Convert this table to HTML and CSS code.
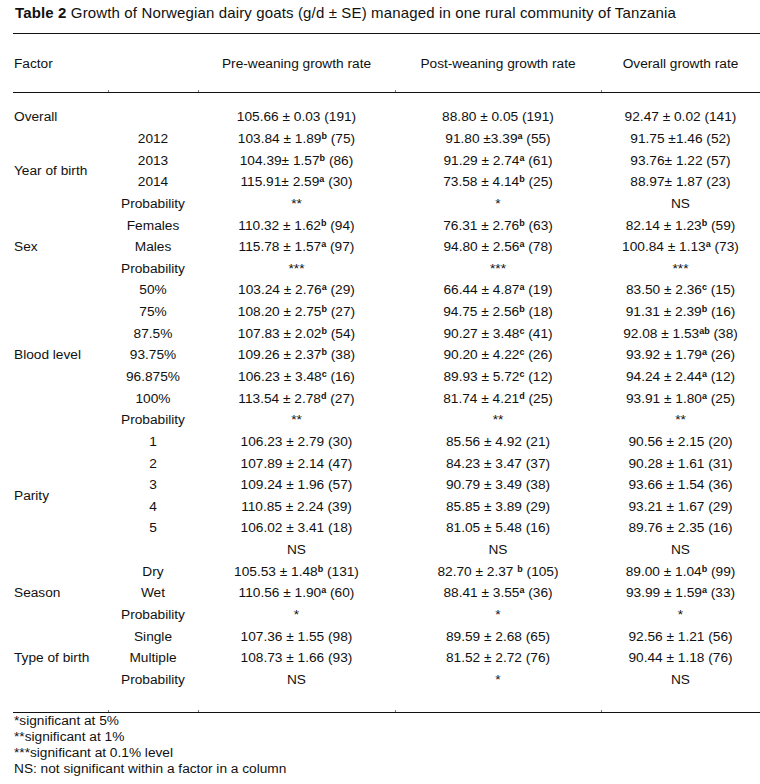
FILE: index.html
```html
<!DOCTYPE html>
<html>
<head>
<meta charset="utf-8">
<link rel="stylesheet" href="styles.css">
</head>
<body>
<div class="page">
  <p class="caption"><b>Table 2</b> Growth of Norwegian dairy goats (g/d ± SE) managed in one rural community of Tanzania</p>
  <table class="data">
    <colgroup>
      <col class="c1"><col class="c2"><col class="c3"><col class="c4"><col class="c5">
    </colgroup>
    <thead>
      <tr>
        <th class="factor">Factor</th>
        <th></th>
        <th>Pre-weaning growth rate</th>
        <th>Post-weaning growth rate</th>
        <th>Overall growth rate</th>
      </tr>
    </thead>
    <tbody>
      <tr class="spacer-top"><td colspan="5"></td></tr>
      <tr><td class="factor">Overall</td><td></td><td>105.66 ± 0.03 (191)</td><td>88.80 ± 0.05 (191)</td><td>92.47 ± 0.02 (141)</td></tr>

      <tr><td class="factor" rowspan="4">Year of birth</td><td>2012</td><td>103.84 ± 1.89<sup>b</sup> (75)</td><td>91.80 ±3.39<sup>a</sup> (55)</td><td>91.75 ±1.46 (52)</td></tr>
      <tr><td>2013</td><td>104.39± 1.57<sup>b</sup> (86)</td><td>91.29 ± 2.74<sup>a</sup> (61)</td><td>93.76± 1.22 (57)</td></tr>
      <tr><td>2014</td><td>115.91± 2.59<sup>a</sup> (30)</td><td>73.58 ± 4.14<sup>b</sup> (25)</td><td>88.97± 1.87 (23)</td></tr>
      <tr><td>Probability</td><td>**</td><td>*</td><td>NS</td></tr>

      <tr><td class="factor" rowspan="3">Sex</td><td>Females</td><td>110.32 ± 1.62<sup>b</sup> (94)</td><td>76.31 ± 2.76<sup>b</sup> (63)</td><td>82.14 ± 1.23<sup>b</sup> (59)</td></tr>
      <tr><td>Males</td><td>115.78 ± 1.57<sup>a</sup> (97)</td><td>94.80 ± 2.56<sup>a</sup> (78)</td><td>100.84 ± 1.13<sup>a</sup> (73)</td></tr>
      <tr><td>Probability</td><td>***</td><td>***</td><td>***</td></tr>

      <tr><td class="factor" rowspan="7">Blood level</td><td>50%</td><td>103.24 ± 2.76<sup>a</sup> (29)</td><td>66.44 ± 4.87<sup>a</sup> (19)</td><td>83.50 ± 2.36<sup>c</sup> (15)</td></tr>
      <tr><td>75%</td><td>108.20 ± 2.75<sup>b</sup> (27)</td><td>94.75 ± 2.56<sup>b</sup> (18)</td><td>91.31 ± 2.39<sup>b</sup> (16)</td></tr>
      <tr><td>87.5%</td><td>107.83 ± 2.02<sup>b</sup> (54)</td><td>90.27 ± 3.48<sup>c</sup> (41)</td><td>92.08 ± 1.53<sup>ab</sup> (38)</td></tr>
      <tr><td>93.75%</td><td>109.26 ± 2.37<sup>b</sup> (38)</td><td>90.20 ± 4.22<sup>c</sup> (26)</td><td>93.92 ± 1.79<sup>a</sup> (26)</td></tr>
      <tr><td>96.875%</td><td>106.23 ± 3.48<sup>c</sup> (16)</td><td>89.93 ± 5.72<sup>c</sup> (12)</td><td>94.24 ± 2.44<sup>a</sup> (12)</td></tr>
      <tr><td>100%</td><td>113.54 ± 2.78<sup>d</sup> (27)</td><td>81.74 ± 4.21<sup>d</sup> (25)</td><td>93.91 ± 1.80<sup>a</sup> (25)</td></tr>
      <tr><td>Probability</td><td>**</td><td>**</td><td>**</td></tr>

      <tr><td class="factor" rowspan="6">Parity</td><td>1</td><td>106.23 ± 2.79 (30)</td><td>85.56 ± 4.92 (21)</td><td>90.56 ± 2.15 (20)</td></tr>
      <tr><td>2</td><td>107.89 ± 2.14 (47)</td><td>84.23 ± 3.47 (37)</td><td>90.28 ± 1.61 (31)</td></tr>
      <tr><td>3</td><td>109.24 ± 1.96 (57)</td><td>90.79 ± 3.49 (38)</td><td>93.66 ± 1.54 (36)</td></tr>
      <tr><td>4</td><td>110.85 ± 2.24 (39)</td><td>85.85 ± 3.89 (29)</td><td>93.21 ± 1.67 (29)</td></tr>
      <tr><td>5</td><td>106.02 ± 3.41 (18)</td><td>81.05 ± 5.48 (16)</td><td>89.76 ± 2.35 (16)</td></tr>
      <tr><td></td><td>NS</td><td>NS</td><td>NS</td></tr>

      <tr><td class="factor" rowspan="3">Season</td><td>Dry</td><td>105.53 ± 1.48<sup>b</sup> (131)</td><td>82.70 ± 2.37 <sup>b</sup> (105)</td><td>89.00 ± 1.04<sup>b</sup> (99)</td></tr>
      <tr><td>Wet</td><td>110.56 ± 1.90<sup>a</sup> (60)</td><td>88.41 ± 3.55<sup>a</sup> (36)</td><td>93.99 ± 1.59<sup>a</sup> (33)</td></tr>
      <tr><td>Probability</td><td>*</td><td>*</td><td>*</td></tr>

      <tr><td class="factor" rowspan="3">Type of birth</td><td>Single</td><td>107.36 ± 1.55 (98)</td><td>89.59 ± 2.68 (65)</td><td>92.56 ± 1.21 (56)</td></tr>
      <tr><td>Multiple</td><td>108.73 ± 1.66 (93)</td><td>81.52 ± 2.72 (76)</td><td>90.44 ± 1.18 (76)</td></tr>
      <tr><td>Probability</td><td>NS</td><td>*</td><td>NS</td></tr>

      <tr class="spacer-bottom"><td></td><td></td><td></td><td></td><td></td></tr>
    </tbody>
  </table>
  <div class="notes">
    <p>*significant at 5%</p>
    <p>**significant at 1%</p>
    <p>***significant at 0.1% level</p>
    <p>NS: not significant within a factor in a column</p>
  </div>
</div>
</body>
</html>
```

FILE: styles.css
```css
html, body {
  margin: 0;
  padding: 0;
  background: #ffffff;
}

body {
  font-family: "Liberation Sans", Arial, sans-serif;
  font-size: 13.7px;
  color: #111111;
}

.page {
  width: 760px;
}

.caption {
  margin: 5px 0 0 15px;
  font-size: 15px;
  letter-spacing: 0.14px;
  line-height: 16px;
  white-space: nowrap;
}

.caption b {
  font-weight: bold;
}

.data {
  margin: 12px 0 0 13px;
  width: 747px;
  border-collapse: collapse;
  table-layout: fixed;
}

.c1 { width: 95px; }
.c2 { width: 90px; }
.c3 { width: 197px; }
.c4 { width: 206px; }
.c5 { width: 159px; }

.data th {
  font-weight: normal;
  height: 58px;
  padding: 0;
  text-align: center;
  vertical-align: middle;
  border-top: 1px solid #111111;
  border-bottom: 1px solid #111111;
  white-space: nowrap;
}

.data th + th {
  background-image: linear-gradient(#777777, #777777);
  background-size: 1px 2px;
  background-position: left bottom;
  background-repeat: no-repeat;
}

.data td {
  height: 21.65px;
  padding: 0;
  line-height: 16px;
  text-align: center;
  vertical-align: middle;
  white-space: nowrap;
}

.data th.factor,
.data td.factor {
  text-align: left;
  padding-left: 1px;
}

.data .spacer-top td {
  height: 13.5px;
}

.data .spacer-bottom td {
  height: 21.5px;
  border-bottom: 1px solid #111111;
}

.data .spacer-bottom td + td {
  background-image: linear-gradient(#777777, #777777);
  background-size: 1px 2px;
  background-position: left bottom;
  background-repeat: no-repeat;
}

sup {
  font-size: 9px;
  font-weight: bold;
  line-height: 0;
  vertical-align: 4px;
}

.notes {
  margin: 0 0 0 14px;
}

.notes p {
  margin: 0;
  line-height: 16px;
  white-space: nowrap;
}
```
